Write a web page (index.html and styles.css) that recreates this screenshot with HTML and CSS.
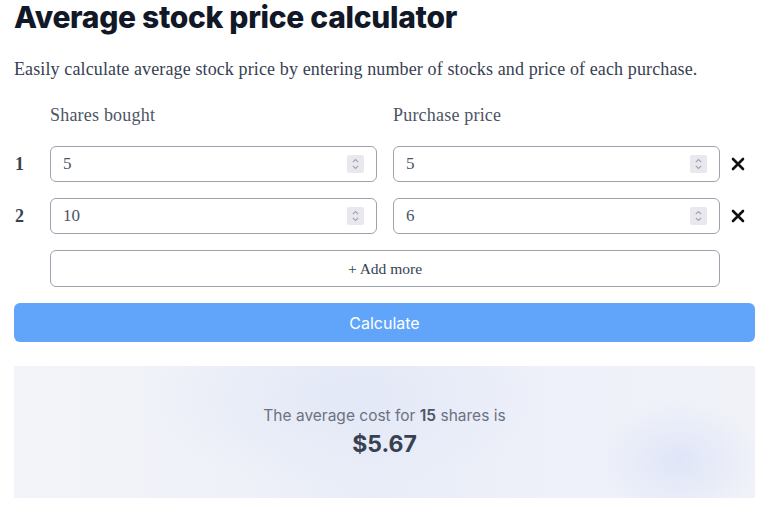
FILE: index.html
```html
<!DOCTYPE html>
<html lang="en">
<head>
    <meta charset="UTF-8">
    <meta name="viewport" content="width=device-width, initial-scale=1.0">
    <title>Average stock price calculator</title>
    <link rel="stylesheet" href="styles.css">
</head>
<body>
    <div class="page">
        <h1 class="title">Average stock price calculator</h1>
        <p class="intro">Easily calculate average stock price by entering number of stocks and price of each purchase.</p>

        <div class="grid">
            <span class="label col-a">Shares bought</span>
            <span class="label col-b">Purchase price</span>

            <span class="row-num">1</span>
            <div class="field col-a">
                <input type="text" value="5">
                <span class="spin"><svg width="9" height="14" viewBox="0 0 9 14"><path d="M1.8 5.2 L4.5 2.5 L7.2 5.2 M1.8 8.8 L4.5 11.5 L7.2 8.8" fill="none" stroke="#9ca3af" stroke-width="1.1"/></svg></span>
            </div>
            <div class="field col-b">
                <input type="text" value="5">
                <span class="spin"><svg width="9" height="14" viewBox="0 0 9 14"><path d="M1.8 5.2 L4.5 2.5 L7.2 5.2 M1.8 8.8 L4.5 11.5 L7.2 8.8" fill="none" stroke="#9ca3af" stroke-width="1.1"/></svg></span>
            </div>
            <button class="remove"><svg width="14" height="14" viewBox="0 0 14 14"><path d="M2 2 L12 12 M12 2 L2 12" stroke="#111" stroke-width="2.6" stroke-linecap="round"/></svg></button>

            <span class="row-num">2</span>
            <div class="field col-a">
                <input type="text" value="10">
                <span class="spin"><svg width="9" height="14" viewBox="0 0 9 14"><path d="M1.8 5.2 L4.5 2.5 L7.2 5.2 M1.8 8.8 L4.5 11.5 L7.2 8.8" fill="none" stroke="#9ca3af" stroke-width="1.1"/></svg></span>
            </div>
            <div class="field col-b">
                <input type="text" value="6">
                <span class="spin"><svg width="9" height="14" viewBox="0 0 9 14"><path d="M1.8 5.2 L4.5 2.5 L7.2 5.2 M1.8 8.8 L4.5 11.5 L7.2 8.8" fill="none" stroke="#9ca3af" stroke-width="1.1"/></svg></span>
            </div>
            <button class="remove"><svg width="14" height="14" viewBox="0 0 14 14"><path d="M2 2 L12 12 M12 2 L2 12" stroke="#111" stroke-width="2.6" stroke-linecap="round"/></svg></button>

            <button class="add-more">+ Add more</button>
        </div>

        <button class="calculate">Calculate</button>

        <div class="result">
            <p class="result-text">The average cost for <b>15</b> shares is</p>
            <p class="result-value">$5.67</p>
        </div>
    </div>
</body>
</html>
```

FILE: styles.css
```css
body {
    margin: 0;
    font-family: "Liberation Serif", serif;
    color: #1f2937;
    background: white;
}
.page {
    padding: 0 13px 0 14px;
}
.title {
    font-family: Inter, "Noto Sans", sans-serif;
    font-size: 30px;
    font-weight: 800;
    color: #111827;
    margin: -1px 0 0;
    line-height: 36px;
    letter-spacing: -0.3px;
}
.intro {
    font-size: 18px;
    letter-spacing: 0.12px;
    color: #374151;
    margin: 22px 0 0;
    line-height: 24px;
}
.grid {
    display: grid;
    grid-template-columns: 36px 1fr 16px 1fr 35px;
    row-gap: 16px;
    margin-top: 22px;
}
.col-a {
    grid-column: 2;
}
.col-b {
    grid-column: 4;
}
.label {
    font-size: 18px;
    letter-spacing: 0.2px;
    color: #4b5563;
    line-height: 24px;
    margin-bottom: 3px;
}
.row-num {
    grid-column: 1;
    font-weight: bold;
    font-size: 18px;
    color: #374151;
    display: flex;
    align-items: center;
    padding-left: 1px;
}
.field {
    display: flex;
    align-items: center;
    height: 36px;
    border: 1px solid #9ca3af;
    border-radius: 6px;
    box-sizing: border-box;
    padding: 0 12px;
}
.field input {
    flex: 1;
    min-width: 0;
    border: none;
    outline: none;
    font-family: "Liberation Serif", serif;
    font-size: 17px;
    color: #4b5563;
    padding: 0;
    background: transparent;
}
.spin {
    width: 17px;
    height: 18px;
    background: #e8e8ee;
    display: flex;
    align-items: center;
    justify-content: center;
    border-radius: 2px;
}
.remove {
    grid-column: 5;
    border: none;
    background: none;
    padding: 0 0 0 11px;
    display: flex;
    align-items: center;
    cursor: pointer;
}
.remove svg {
    flex-shrink: 0;
}
.add-more {
    grid-column: 2 / 5;
    height: 37px;
    background: white;
    border: 1px solid #9ca3af;
    border-radius: 6px;
    font-family: "Liberation Serif", serif;
    font-size: 15.5px;
    color: #374151;
    cursor: pointer;
}
.calculate {
    display: block;
    width: 100%;
    margin-top: 16px;
    height: 39px;
    background: #60a5fa;
    color: white;
    border: none;
    border-radius: 6px;
    font-family: Inter, "Noto Sans", sans-serif;
    font-size: 16px;
    cursor: pointer;
}
.result {
    margin-top: 24px;
    height: 132px;
    background:
        radial-gradient(ellipse 80px 60px at 665px 95px, rgba(222, 228, 248, 0.9), rgba(222, 228, 248, 0)),
        radial-gradient(ellipse 200px 90px at 330px 30px, rgba(226, 231, 247, 0.8), rgba(226, 231, 247, 0)),
        linear-gradient(90deg, #f3f4f9, #eef1f8 30%, #e9edf8 48%, #eef1f9 75%, #f0f2f8);
    display: flex;
    flex-direction: column;
    align-items: center;
    justify-content: center;
    font-family: Inter, "Noto Sans", sans-serif;
}
.result-text {
    margin: 0;
    font-size: 15.5px;
    color: #6b7280;
    line-height: 22px;
}
.result-text b {
    color: #4b5563;
    font-weight: 600;
}
.result-value {
    margin: 2px 0 0;
    font-size: 23px;
    font-weight: 700;
    color: #374151;
    line-height: 30px;
}
```
